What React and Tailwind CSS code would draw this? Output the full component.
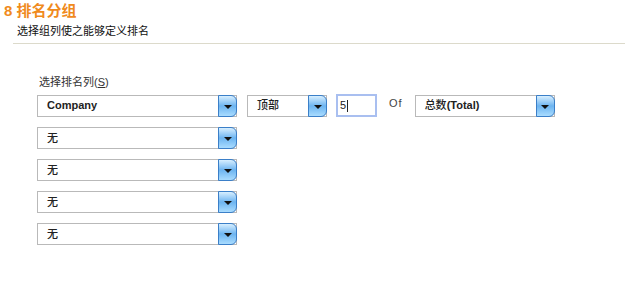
import React from 'react';

function Select({ value, width, cjk }) {
    return (
        <div className={`flex h-[22px] ${width} items-stretch border border-[#b9b9b9] bg-white`}>
            <div className={`flex flex-1 items-center pl-[9px] text-[11px] leading-none text-[#222] ${cjk ? 'font-medium' : 'font-bold'}`}>
                {value}
            </div>
            <div className="relative -my-px -mr-px flex w-[19px] items-center justify-center rounded-r-[6px] border border-[#3b7fc8] bg-gradient-to-b from-[#d7efff] via-[#6cb4f0] to-[#a9dcff]">
                <div className="mt-[2px] h-0 w-0 border-x-[4px] border-t-[4px] border-x-transparent border-t-[#111]" />
            </div>
        </div>
    );
}

export default function App() {
    return (
        <div
            className="h-[297px] w-[628px] bg-white"
            style={{ fontFamily: '"Liberation Sans", "Noto Sans CJK SC", sans-serif' }}
        >
            <div className="pl-[4px] pt-[2px] text-[15px] font-bold leading-[18px] text-[#f08a1c]">
                8 排名分组
            </div>
            <div className="pl-[17px] pt-[5px] text-[11px] leading-[13px] text-[#111]">
                选择组列使之能够定义排名
            </div>
            <div className="ml-[13px] mr-[3px] mt-[5px] h-px bg-[#dcdacb]" />

            <div className="pl-[37px] pt-[32px]">
                <div className="pl-[2px] text-[11px] leading-[13px] text-[#333]">
                    选择排名列(<span className="underline">S</span>)
                </div>
                <div className="mt-[5px] flex items-center">
                    <Select value="Company" width="w-[200px]" />
                    <div className="ml-[10px]">
                        <Select value="顶部" width="w-[80px]" cjk />
                    </div>
                    <div className="ml-[9px] flex h-[23px] w-[41px] items-center border-2 border-[#a9bff0] bg-white pl-[2px] text-[11px] text-[#222]">
                        5<span className="ml-px h-[12px] w-px bg-[#222]" />
                    </div>
                    <div className="ml-[12px] -mt-[4px] text-[11px] tracking-[1px] text-[#444]">Of</div>
                    <div className="ml-[12px]">
                        <Select
                            value={<>总数<span className="font-bold">(Total)</span></>}
                            width="w-[140px]"
                            cjk
                        />
                    </div>
                </div>
                <div className="mt-[10px] flex flex-col gap-[10px]">
                    <Select value="无" width="w-[200px]" cjk />
                    <Select value="无" width="w-[200px]" cjk />
                    <Select value="无" width="w-[200px]" cjk />
                    <Select value="无" width="w-[200px]" cjk />
                </div>
            </div>
        </div>
    );
}
